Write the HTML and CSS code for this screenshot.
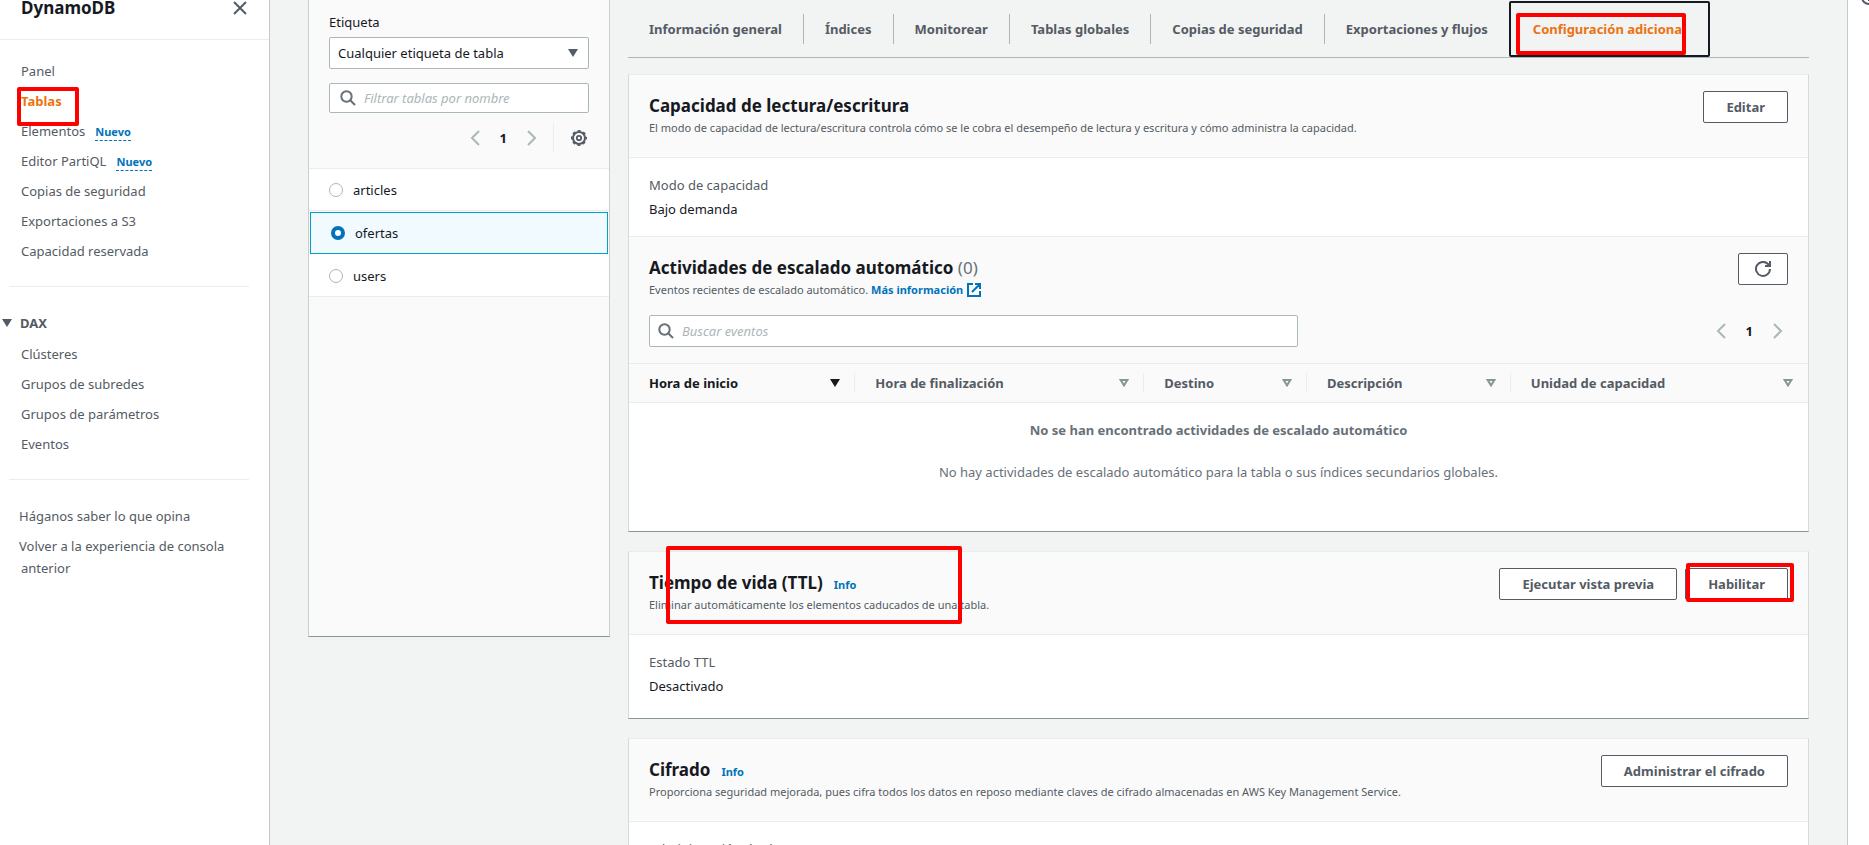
FILE: index.html
```html
<!DOCTYPE html>
<html lang="es">
<head>
<meta charset="utf-8">
<title>DynamoDB</title>
<link rel="stylesheet" href="styles.css">
</head>
<body>
<div class="app">
  <aside class="sidebar">
    <header class="sidebar-head">
      <h2 class="sidebar-title">DynamoDB</h2>
      <button class="icon-button" aria-label="Cerrar">
        <svg width="16" height="16" viewBox="0 0 16 16" fill="none" stroke="#545b64" stroke-width="2"><path d="M2 2l12 12M14 2L2 14"/></svg>
      </button>
    </header>
    <nav class="nav">
      <ul class="nav-list">
        <li><a href="#">Panel</a></li>
        <li><a href="#" class="current marked">Tablas<span class="mark mark-nav"></span></a></li>
        <li><a href="#">Elementos</a><a href="#" class="new">Nuevo</a></li>
        <li><a href="#">Editor PartiQL</a><a href="#" class="new">Nuevo</a></li>
        <li><a href="#">Copias de seguridad</a></li>
        <li><a href="#">Exportaciones a S3</a></li>
        <li><a href="#">Capacidad reservada</a></li>
      </ul>
      <hr class="nav-rule">
      <button class="nav-section" aria-expanded="true">
        <svg width="10" height="8" viewBox="0 0 10 8"><path d="M0 0h10L5 8z" fill="#545b64"/></svg>DAX
      </button>
      <ul class="nav-list">
        <li><a href="#">Clústeres</a></li>
        <li><a href="#">Grupos de subredes</a></li>
        <li><a href="#">Grupos de parámetros</a></li>
        <li><a href="#">Eventos</a></li>
      </ul>
      <hr class="nav-rule">
      <ul class="nav-list nav-foot">
        <li><a href="#">Háganos saber lo que opina</a></li>
        <li><a href="#">Volver a la experiencia de consola anterior</a></li>
      </ul>
    </nav>
  </aside>

  <main class="main">
    <section class="tables">
      <div class="tables-tools">
        <label class="field-label" for="tag">Etiqueta</label>
        <div class="select-wrap">
          <select id="tag" class="control select"><option>Cualquier etiqueta de tabla</option></select>
          <svg class="caret" width="10" height="8" viewBox="0 0 10 8"><path d="M0 0h10L5 8z" fill="#545b64"/></svg>
        </div>
        <div class="control search">
          <svg width="16" height="16" viewBox="0 0 16 16" fill="none" stroke="#687078" stroke-width="2"><circle cx="6.5" cy="6.5" r="5.2"/><path d="M10.2 10.2L15 15"/></svg>
          <input type="search" aria-label="Filtrar tablas" placeholder="Filtrar tablas por nombre">
        </div>
        <div class="pager">
          <button class="icon-button" aria-label="Anterior"><svg width="16" height="16" viewBox="0 0 16 16" fill="none" stroke="#aab7b8" stroke-width="2"><path d="M12 1L5 8l7 7"/></svg></button>
          <button class="page">1</button>
          <button class="icon-button" aria-label="Siguiente"><svg width="16" height="16" viewBox="0 0 16 16" fill="none" stroke="#aab7b8" stroke-width="2"><path d="M4 1l7 7-7 7"/></svg></button>
          <span class="pager-rule"></span>
          <button class="icon-button" aria-label="Preferencias"><svg width="16" height="16" viewBox="0 0 16 16" fill="none" stroke="#545b64"><circle cx="8" cy="8" r="6" stroke-width="2"/><circle cx="8" cy="8" r="7.2" stroke-width="1.6" stroke-dasharray="3 2.65" stroke-dashoffset="1.5"/><circle cx="8" cy="8" r="2.2" stroke-width="1.8"/></svg></button>
        </div>
      </div>
      <div class="rows">
        <label class="row"><input type="radio" name="table">articles</label>
        <label class="row selected"><input type="radio" name="table" checked>ofertas</label>
        <label class="row"><input type="radio" name="table">users</label>
      </div>
    </section>

    <section class="details">
      <div class="tabs" role="tablist">
        <button class="tab" role="tab">Información general</button>
        <button class="tab" role="tab">Índices</button>
        <button class="tab" role="tab">Monitorear</button>
        <button class="tab" role="tab">Tablas globales</button>
        <button class="tab" role="tab">Copias de seguridad</button>
        <button class="tab" role="tab">Exportaciones y flujos</button>
        <button class="tab active" role="tab" aria-selected="true">Configuración adicional<span class="mark mark-tab"></span></button>
      </div>

      <article class="card">
        <header class="card-head">
          <div>
            <h3 class="title">Capacidad de lectura/escritura</h3>
            <p class="desc">El modo de capacidad de lectura/escritura controla cómo se le cobra el desempeño de lectura y escritura y cómo administra la capacidad.</p>
          </div>
          <button class="button">Editar</button>
        </header>
        <dl class="facts facts-tight"><dt>Modo de capacidad</dt><dd>Bajo demanda</dd></dl>
        <header class="card-head card-head-inner">
          <div>
            <h3 class="title">Actividades de escalado automático <span class="count">(0)</span></h3>
            <p class="desc">Eventos recientes de escalado automático. <a href="#" class="more">Más información<svg width="14" height="14" viewBox="0 0 14 14" fill="none" stroke="#0073bb" stroke-width="2"><path d="M6 1H1v12h12V8M8 1h5v5M13 1L5 9"/></svg></a></p>
          </div>
          <button class="button button-icon" aria-label="Actualizar"><svg width="16" height="16" viewBox="0 0 16 16" fill="none" stroke="#545b64" stroke-width="2"><path d="M15 8a7 7 0 1 1-2-5l1.500 1.500M15 0v5h-5"/></svg></button>
        </header>
        <div class="event-tools">
          <div class="control search search-wide">
            <svg width="16" height="16" viewBox="0 0 16 16" fill="none" stroke="#687078" stroke-width="2"><circle cx="6.500" cy="6.500" r="5.200"/><path d="M10.200 10.200L15 15"/></svg>
            <input type="search" aria-label="Buscar eventos" placeholder="Buscar eventos">
          </div>
          <div class="pager pager-events">
            <button class="icon-button" aria-label="Anterior"><svg width="16" height="16" viewBox="0 0 16 16" fill="none" stroke="#aab7b8" stroke-width="2"><path d="M12 1L5 8l7 7"/></svg></button>
            <button class="page">1</button>
            <button class="icon-button" aria-label="Siguiente"><svg width="16" height="16" viewBox="0 0 16 16" fill="none" stroke="#aab7b8" stroke-width="2"><path d="M4 1l7 7-7 7"/></svg></button>
          </div>
        </div>
        <table class="events">
          <colgroup><col class="c1"><col class="c2"><col class="c3"><col class="c4"><col class="c5"></colgroup>
          <thead>
            <tr>
              <th class="sorted"><div class="th">Hora de inicio<svg width="10" height="8" viewBox="0 0 10 8"><path d="M0 0h10L5 8z" fill="#16191f"/></svg></div></th>
              <th><div class="th">Hora de finalización<svg width="10" height="8" viewBox="0 0 10 8"><path d="M1.600 1h6.800L5 6.400z" fill="none" stroke="#879596" stroke-width="2"/></svg></div></th>
              <th><div class="th">Destino<svg width="10" height="8" viewBox="0 0 10 8"><path d="M1.600 1h6.800L5 6.400z" fill="none" stroke="#879596" stroke-width="2"/></svg></div></th>
              <th><div class="th">Descripción<svg width="10" height="8" viewBox="0 0 10 8"><path d="M1.600 1h6.800L5 6.400z" fill="none" stroke="#879596" stroke-width="2"/></svg></div></th>
              <th><div class="th">Unidad de capacidad<svg width="10" height="8" viewBox="0 0 10 8"><path d="M1.600 1h6.800L5 6.400z" fill="none" stroke="#879596" stroke-width="2"/></svg></div></th>
            </tr>
          </thead>
          <tbody>
            <tr><td colspan="5" class="empty"><strong>No se han encontrado actividades de escalado automático</strong><p>No hay actividades de escalado automático para la tabla o sus índices secundarios globales.</p></td></tr>
          </tbody>
        </table>
      </article>

      <article class="card">
        <header class="card-head">
          <div class="marked">
            <h3 class="title">Tiempo de vida (TTL)<a href="#" class="info">Info</a></h3>
            <p class="desc">Eliminar automáticamente los elementos caducados de una tabla.</p>
            <span class="mark mark-ttl"></span>
          </div>
          <div class="actions">
            <button class="button">Ejecutar vista previa</button>
            <button class="button marked">Habilitar<span class="mark mark-button"></span></button>
          </div>
        </header>
        <dl class="facts"><dt>Estado TTL</dt><dd>Desactivado</dd></dl>
      </article>

      <article class="card">
        <header class="card-head">
          <div>
            <h3 class="title">Cifrado<a href="#" class="info">Info</a></h3>
            <p class="desc">Proporciona seguridad mejorada, pues cifra todos los datos en reposo mediante claves de cifrado almacenadas en AWS Key Management Service.</p>
          </div>
          <button class="button">Administrar el cifrado</button>
        </header>
        <dl class="facts"><dt>Administración de claves</dt></dl>
      </article>
    </section>
  </main>

  <aside class="help">
    <button class="icon-button" aria-label="Información"><svg width="16" height="16" viewBox="0 0 16 16" fill="none" stroke="#545b64" stroke-width="2"><circle cx="8" cy="8" r="7"/><path d="M8 7v5M8 4v2"/></svg></button>
  </aside>
</div>
</body>
</html>
```
FILE: styles.css
```css
* { box-sizing: border-box; }
body, h2, h3, p, ul, dl, dd { margin: 0; padding: 0; }
body {
  font-family: "Noto Sans", "Open Sans", sans-serif;
  font-size: 13px;
  line-height: 22px;
  color: #16191f;
  background: #f2f3f3;
  height: 100vh;
  overflow: hidden;
}
a { text-decoration: none; color: #0073bb; }
button, input, select { font: inherit; color: inherit; }
button { background: none; border: 0; padding: 0; }
svg { display: block; flex: none; }
.app { display: flex; height: 100vh; overflow: hidden; }
.icon-button { display: flex; }

.sidebar { flex: none; width: 270px; background: #fff; border-right: 1px solid #c5cbcb; }
.sidebar-head {
  display: flex; justify-content: space-between;
  height: 40px; padding: 0 21px;
  border-bottom: 1px solid #eaeded;
}
.sidebar-title { font-size: 17px; line-height: 16px; font-weight: 700; }
.nav-list { list-style: none; padding: 0 20px 0 21px; }
.nav-list li { margin-bottom: 8px; display: flex; }
.nav-list a { color: #545b64; }
.nav { padding-top: 20px; }
.nav-list .current { color: #ec7211; font-weight: 700; }
.nav-list .new {
  color: #0073bb; font-size: 11px; font-weight: 700; line-height: 18px;
  margin: 3px 0 0 10px; height: 18px; border-bottom: 1px dashed #0073bb;
}
.nav-rule { border: 0; border-top: 1px solid #eaeded; margin: 24px 20px 25px 9px; }
.nav-section {
  display: flex; align-items: center; gap: 8px;
  padding-left: 2px; margin-bottom: 9px; font-weight: 700; color: #545b64;
}
.nav-foot li { padding-right: 10px; }
.nav-foot a { text-indent: -2px; }

.main { flex: 1; min-width: 0; display: flex; align-items: flex-start; gap: 18px; padding: 0 38px; }
.tables {
  flex: none; width: 302px; height: 637px; background: #fafafa;
  border: 1px solid #c9cfcf; border-top: 0; border-bottom-color: #879596;
}
.tables-tools { padding: 11px 20px 15px; border-bottom: 1px solid #eaeded; }
.field-label { display: block; margin-bottom: 4px; }
.control { border: 1px solid #aab7b8; border-radius: 2px; background: #fff; }
.select-wrap { position: relative; }
.select { display: block; width: 100%; height: 32px; padding: 0 30px 0 8px; appearance: none; outline: 0; }
.caret { position: absolute; right: 11px; top: 12px; pointer-events: none; }
.search { display: flex; align-items: center; gap: 8px; height: 30px; padding: 0 10px; margin-top: 14px; }
.search input { flex: 1; min-width: 0; border: 0; outline: 0; background: none; padding: 0; }
.search input::placeholder { color: #aab7b8; font-style: italic; }
.pager { display: flex; align-items: center; justify-content: flex-end; margin-top: 10px; padding-right: 2px; gap: 17px; height: 30px; }
.page { font-weight: 700; }
.pager-rule { width: 1px; height: 30px; background: #eaeded; margin-left: -4px; }
.row {
  display: flex; align-items: center; gap: 10px;
  height: 42px; padding: 0 20px; background: #fff; border-bottom: 1px solid #eaeded;
}
.row input {
  appearance: none; width: 14px; height: 14px; margin: 0;
  border: 1px solid #aab7b8; border-radius: 50%; background: #fff;
}
.row input:checked { border: 4px solid #0073bb; }
.row.selected { margin: 1px; border: 1px solid #00a1c9; background: #f1faff; }

.details { flex: 1; min-width: 0; }
.tabs { display: flex; border-bottom: 1px solid #aab7b8; height: 58px; padding-top: 1px; margin-bottom: 16px; }
.tab { font-weight: 700; color: #545b64; display: flex; align-items: center; padding-left: 21px; white-space: nowrap; }
.tab:not(.active)::after { content: ""; height: 30px; border-right: 1px solid #aab7b8; margin-left: 21px; }
.tab:nth-child(6)::after { display: none; }
.tab.active { position: relative; color: #ec7211; border: 2px solid #16191f; border-radius: 2px; margin-left: 21px; padding: 0 22px; }

.card {
  background: #fff; margin-bottom: 19px;
  border: 1px solid #d5dbdb; border-top-color: #eaeded; border-bottom-color: #879596;
}
.card-head {
  display: flex; justify-content: space-between; align-items: flex-start;
  height: 83px; padding: 16px 20px 0; background: #fafafa; border-bottom: 1px solid #eaeded;
}
.card-head-inner { height: 79px; border-top: 1px solid #eaeded; border-bottom: 0; }
.title { font-size: 17px; line-height: 29px; font-weight: 700; }
.count { font-weight: 400; color: #687078; }
.desc { font-size: 11px; line-height: 16px; color: #545b64; }
.more { font-weight: 700; display: inline-flex; align-items: center; gap: 4px; vertical-align: top; }
.info { font-size: 11px; line-height: 11px; font-weight: 700; margin-left: 11px; }
.button {
  height: 32px; padding: 0 22px; background: #fff; color: #545b64;
  border: 1px solid #545b64; border-radius: 2px; font-weight: 700;
}
.button-icon { padding: 0 16px; }
.actions { display: flex; gap: 8px; }
.facts { padding: 16px 20px; height: 83px; }
.facts-tight { height: 78px; }
.facts dt { color: #545b64; margin-bottom: 2px; }
.event-tools {
  display: flex; justify-content: space-between; height: 49px; padding: 0 20px;
  background: #fafafa; border-bottom: 1px solid #eaeded;
}
.search-wide { width: 57%; height: 32px; margin: 0; padding: 0 8px; }
.pager-events { margin: 0; height: 32px; }
.events { width: 100%; table-layout: fixed; border-collapse: collapse; }
.c1 { width: 19.2%; } .c2 { width: 24.5%; } .c3 { width: 13.8%; } .c4 { width: 17.3%; }
.events th { background: #fafafa; text-align: left; color: #545b64; padding: 0; height: 38px; border-bottom: 1px solid #eaeded; }
.events .sorted { color: #16191f; }
.th { display: flex; justify-content: space-between; align-items: center; height: 19px; padding: 0 14px 0 20px; border-right: 1px solid #eaeded; }
th:last-child .th { border: 0; padding-right: 15px; }
.empty { height: 129px; padding: 16px 20px 0; text-align: center; vertical-align: top; color: #687078; }
.empty strong { display: block; margin-bottom: 20px; }

.help { flex: none; width: 22px; background: #fff; border-left: 1px solid #c5cbcb; padding-left: 13px; }
.help .icon-button { margin-top: -11px; }

.marked { position: relative; }
.mark { position: absolute; border: 4px solid #f00; border-radius: 2px; pointer-events: none; }
.mark-nav { left: -4px; top: -3px; width: 62px; height: 39px; }
.mark-tab { left: 5px; right: 22px; top: 10px; bottom: 0; }
.mark-ttl { left: 17px; top: -22px; width: 296px; height: 78px; }
.mark-button { left: 0; right: -7px; top: -6px; bottom: -3px; }
```
